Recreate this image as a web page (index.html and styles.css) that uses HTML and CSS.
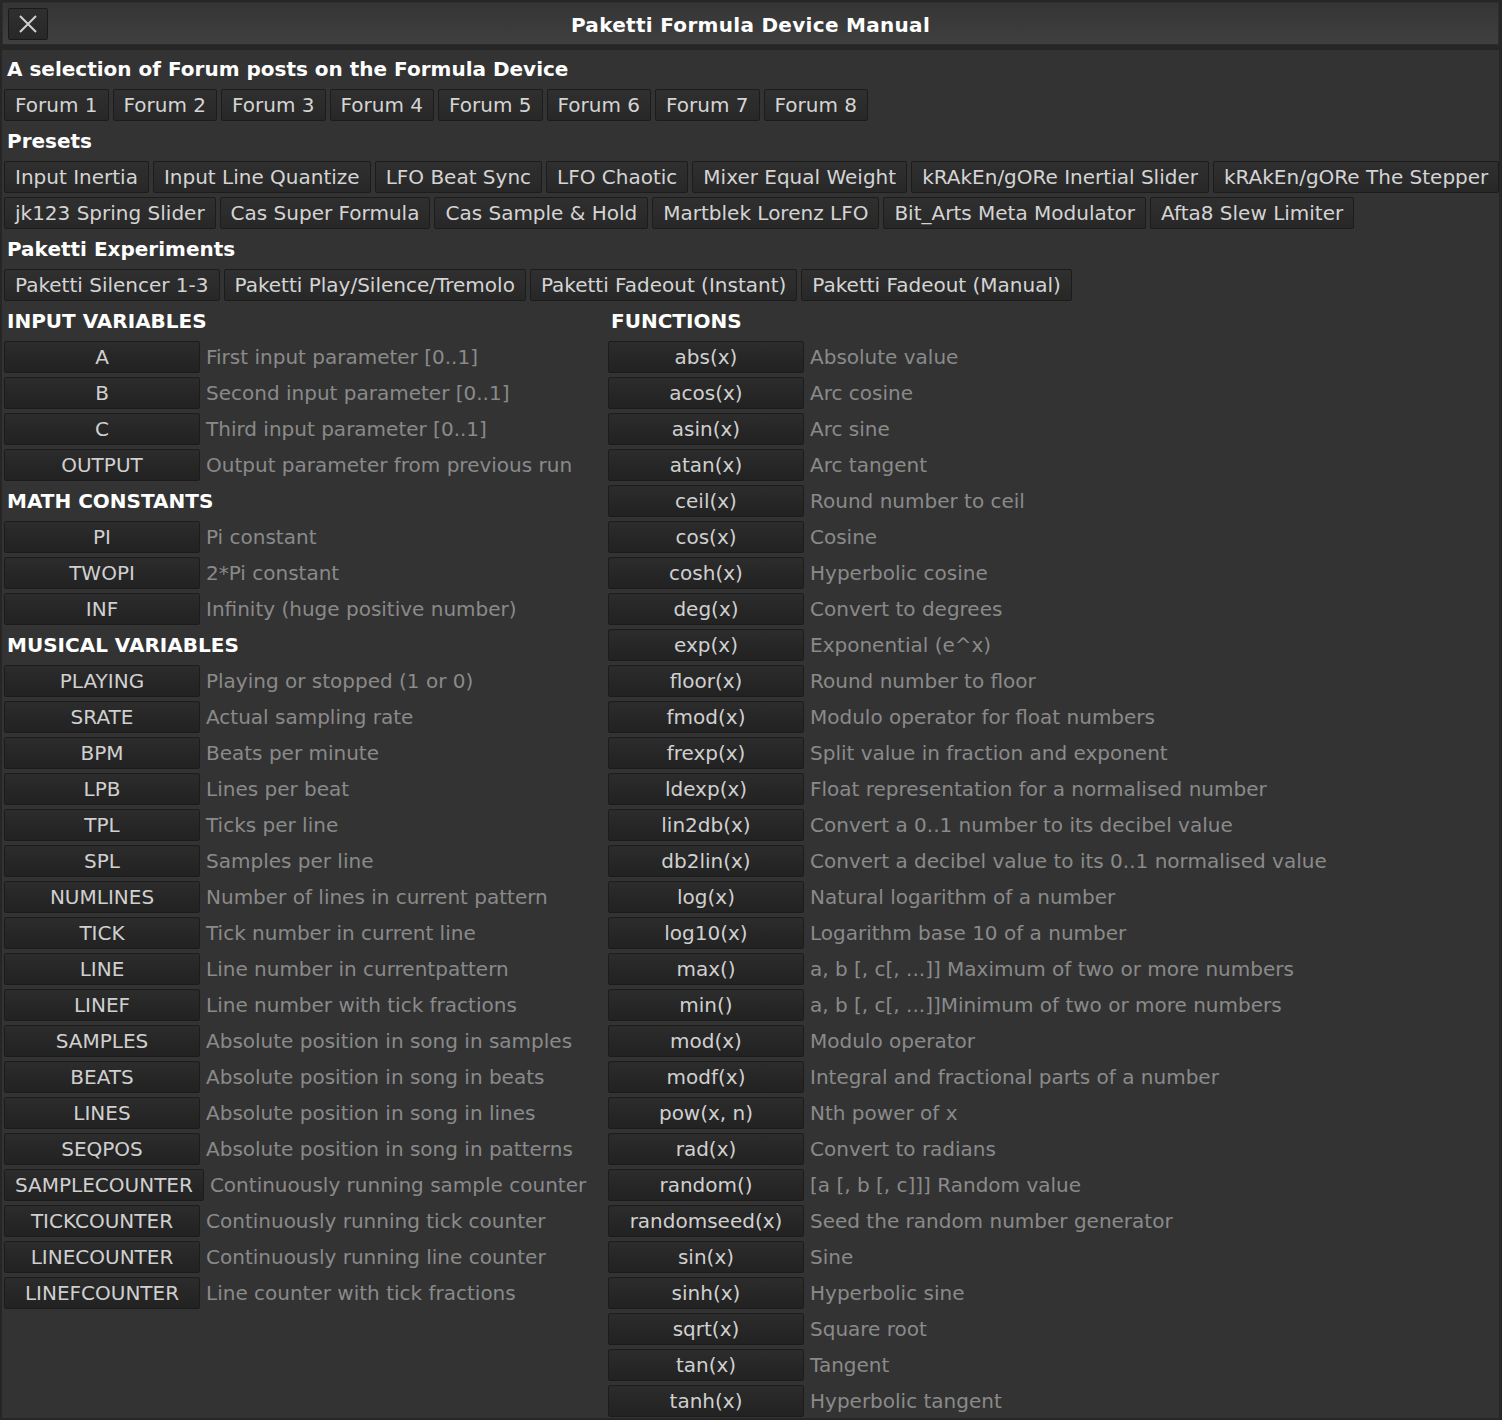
FILE: index.html
```html
<!DOCTYPE html>
<html lang="en">
<head>
  <meta charset="UTF-8">
  <title>Paketti Formula Device Manual</title>
  <link rel="stylesheet" href="styles.css">
</head>
<body>
  <div class="window">
    <div class="titlebar">
      <button class="close" aria-label="Close">
        <svg width="20" height="20" viewBox="0 0 20 20"><path d="M2 2 L18 18 M18 2 L2 18" stroke="#d0d0d0" stroke-width="2"/></svg>
      </button>
      <div class="title">Paketti Formula Device Manual</div>
    </div>
    <div class="content">
      <div class="heading">A selection of Forum posts on the Formula Device</div>
      <div class="btnrow">
        <button class="btn">Forum 1</button>
        <button class="btn">Forum 2</button>
        <button class="btn">Forum 3</button>
        <button class="btn">Forum 4</button>
        <button class="btn">Forum 5</button>
        <button class="btn">Forum 6</button>
        <button class="btn">Forum 7</button>
        <button class="btn">Forum 8</button>
      </div>
      <div class="heading">Presets</div>
      <div class="btnrow">
        <button class="btn">Input Inertia</button>
        <button class="btn">Input Line Quantize</button>
        <button class="btn">LFO Beat Sync</button>
        <button class="btn">LFO Chaotic</button>
        <button class="btn">Mixer Equal Weight</button>
        <button class="btn">kRAkEn/gORe Inertial Slider</button>
        <button class="btn">kRAkEn/gORe The Stepper</button>
      </div>
      <div class="btnrow">
        <button class="btn">jk123 Spring Slider</button>
        <button class="btn">Cas Super Formula</button>
        <button class="btn">Cas Sample &amp; Hold</button>
        <button class="btn">Martblek Lorenz LFO</button>
        <button class="btn">Bit_Arts Meta Modulator</button>
        <button class="btn">Afta8 Slew Limiter</button>
      </div>
      <div class="heading">Paketti Experiments</div>
      <div class="btnrow">
        <button class="btn">Paketti Silencer 1-3</button>
        <button class="btn">Paketti Play/Silence/Tremolo</button>
        <button class="btn">Paketti Fadeout (Instant)</button>
        <button class="btn">Paketti Fadeout (Manual)</button>
      </div>

      <div class="columns">
        <div class="col">
          <div class="heading">INPUT VARIABLES</div>
          <div class="row"><button class="key">A</button><span class="desc">First input parameter [0..1]</span></div>
          <div class="row"><button class="key">B</button><span class="desc">Second input parameter [0..1]</span></div>
          <div class="row"><button class="key">C</button><span class="desc">Third input parameter [0..1]</span></div>
          <div class="row"><button class="key">OUTPUT</button><span class="desc">Output parameter from previous run</span></div>
          <div class="heading">MATH CONSTANTS</div>
          <div class="row"><button class="key">PI</button><span class="desc">Pi constant</span></div>
          <div class="row"><button class="key">TWOPI</button><span class="desc">2*Pi constant</span></div>
          <div class="row"><button class="key">INF</button><span class="desc">Infinity (huge positive number)</span></div>
          <div class="heading">MUSICAL VARIABLES</div>
          <div class="row"><button class="key">PLAYING</button><span class="desc">Playing or stopped (1 or 0)</span></div>
          <div class="row"><button class="key">SRATE</button><span class="desc">Actual sampling rate</span></div>
          <div class="row"><button class="key">BPM</button><span class="desc">Beats per minute</span></div>
          <div class="row"><button class="key">LPB</button><span class="desc">Lines per beat</span></div>
          <div class="row"><button class="key">TPL</button><span class="desc">Ticks per line</span></div>
          <div class="row"><button class="key">SPL</button><span class="desc">Samples per line</span></div>
          <div class="row"><button class="key">NUMLINES</button><span class="desc">Number of lines in current pattern</span></div>
          <div class="row"><button class="key">TICK</button><span class="desc">Tick number in current line</span></div>
          <div class="row"><button class="key">LINE</button><span class="desc">Line number in currentpattern</span></div>
          <div class="row"><button class="key">LINEF</button><span class="desc">Line number with tick fractions</span></div>
          <div class="row"><button class="key">SAMPLES</button><span class="desc">Absolute position in song in samples</span></div>
          <div class="row"><button class="key">BEATS</button><span class="desc">Absolute position in song in beats</span></div>
          <div class="row"><button class="key">LINES</button><span class="desc">Absolute position in song in lines</span></div>
          <div class="row"><button class="key">SEQPOS</button><span class="desc">Absolute position in song in patterns</span></div>
          <div class="row"><button class="key">SAMPLECOUNTER</button><span class="desc">Continuously running sample counter</span></div>
          <div class="row"><button class="key">TICKCOUNTER</button><span class="desc">Continuously running tick counter</span></div>
          <div class="row"><button class="key">LINECOUNTER</button><span class="desc">Continuously running line counter</span></div>
          <div class="row"><button class="key">LINEFCOUNTER</button><span class="desc">Line counter with tick fractions</span></div>
        </div>
        <div class="col">
          <div class="heading">FUNCTIONS</div>
          <div class="row"><button class="key">abs(x)</button><span class="desc">Absolute value</span></div>
          <div class="row"><button class="key">acos(x)</button><span class="desc">Arc cosine</span></div>
          <div class="row"><button class="key">asin(x)</button><span class="desc">Arc sine</span></div>
          <div class="row"><button class="key">atan(x)</button><span class="desc">Arc tangent</span></div>
          <div class="row"><button class="key">ceil(x)</button><span class="desc">Round number to ceil</span></div>
          <div class="row"><button class="key">cos(x)</button><span class="desc">Cosine</span></div>
          <div class="row"><button class="key">cosh(x)</button><span class="desc">Hyperbolic cosine</span></div>
          <div class="row"><button class="key">deg(x)</button><span class="desc">Convert to degrees</span></div>
          <div class="row"><button class="key">exp(x)</button><span class="desc">Exponential (e^x)</span></div>
          <div class="row"><button class="key">floor(x)</button><span class="desc">Round number to floor</span></div>
          <div class="row"><button class="key">fmod(x)</button><span class="desc">Modulo operator for float numbers</span></div>
          <div class="row"><button class="key">frexp(x)</button><span class="desc">Split value in fraction and exponent</span></div>
          <div class="row"><button class="key">ldexp(x)</button><span class="desc">Float representation for a normalised number</span></div>
          <div class="row"><button class="key">lin2db(x)</button><span class="desc">Convert a 0..1 number to its decibel value</span></div>
          <div class="row"><button class="key">db2lin(x)</button><span class="desc">Convert a decibel value to its 0..1 normalised value</span></div>
          <div class="row"><button class="key">log(x)</button><span class="desc">Natural logarithm of a number</span></div>
          <div class="row"><button class="key">log10(x)</button><span class="desc">Logarithm base 10 of a number</span></div>
          <div class="row"><button class="key">max()</button><span class="desc">a, b [, c[, ...]] Maximum of two or more numbers</span></div>
          <div class="row"><button class="key">min()</button><span class="desc">a, b [, c[, ...]]Minimum of two or more numbers</span></div>
          <div class="row"><button class="key">mod(x)</button><span class="desc">Modulo operator</span></div>
          <div class="row"><button class="key">modf(x)</button><span class="desc">Integral and fractional parts of a number</span></div>
          <div class="row"><button class="key">pow(x, n)</button><span class="desc">Nth power of x</span></div>
          <div class="row"><button class="key">rad(x)</button><span class="desc">Convert to radians</span></div>
          <div class="row"><button class="key">random()</button><span class="desc">[a [, b [, c]]] Random value</span></div>
          <div class="row"><button class="key">randomseed(x)</button><span class="desc">Seed the random number generator</span></div>
          <div class="row"><button class="key">sin(x)</button><span class="desc">Sine</span></div>
          <div class="row"><button class="key">sinh(x)</button><span class="desc">Hyperbolic sine</span></div>
          <div class="row"><button class="key">sqrt(x)</button><span class="desc">Square root</span></div>
          <div class="row"><button class="key">tan(x)</button><span class="desc">Tangent</span></div>
          <div class="row"><button class="key">tanh(x)</button><span class="desc">Hyperbolic tangent</span></div>
        </div>
      </div>
    </div>
  </div>
</body>
</html>
```
FILE: styles.css
```css
html, body {
  margin: 0;
  padding: 0;
  background-color: #262626;
}
body {
  font-family: "DejaVu Sans", "Liberation Sans", sans-serif;
  font-size: 20px;
  color: #d2d2d2;
}
.window {
  width: 1502px;
  height: 1420px;
  box-sizing: border-box;
  border: 2px solid #262626;
  border-right-width: 3px;
  background-color: #333333;
  overflow: hidden;
}
.titlebar {
  position: relative;
  height: 43px;
  box-sizing: border-box;
  background: linear-gradient(to bottom, #353535 0%, #3a3a3a 50%, #404040 100%);
  border: 1px solid #2e2e2e;
  border-bottom: 1px solid #2a2a2a;
  display: flex;
  align-items: center;
  justify-content: center;
  padding-top: 2px;
}
.titlebar + .content {
  border-top: 5px solid #262626;
}
.close {
  position: absolute;
  left: 5px;
  top: 5px;
  width: 40px;
  height: 32px;
  padding: 0;
  background: linear-gradient(to bottom, #2f2f2f, #282828);
  border: 1px solid #1a1a1a;
  border-radius: 2px;
  display: flex;
  align-items: center;
  justify-content: center;
}
.title {
  font-weight: bold;
  color: #ffffff;
  font-size: 20px;
  letter-spacing: 0.3px;
}
.content {
  padding: 3px 2px 0 2px;
  display: flex;
  flex-direction: column;
  gap: 4px;
}
.heading {
  height: 32px;
  line-height: 32px;
  padding-left: 3px;
  font-weight: bold;
  color: #ffffff;
  white-space: nowrap;
}
.btnrow {
  display: flex;
  gap: 4px;
}
.btn, .key {
  font-family: inherit;
  font-size: 20px;
  height: 32px;
  line-height: 30px;
  box-sizing: border-box;
  padding: 0 10px;
  color: #d4d4d4;
  background: linear-gradient(to bottom, #2f2f2f 0%, #2b2b2b 60%, #272727 100%);
  border: 1px solid #1c1c1c;
  border-radius: 2px;
  white-space: nowrap;
  cursor: pointer;
}
.btn:hover, .key:hover {
  background: #3a3a3a;
}
.columns {
  display: grid;
  grid-template-columns: 600px 1fr;
  column-gap: 4px;
}
.col {
  display: flex;
  flex-direction: column;
  gap: 4px;
}
.row {
  display: flex;
  align-items: center;
  gap: 6px;
  height: 32px;
}
.key {
  min-width: 196px;
  text-align: center;
  color: #d0d0d0;
  background: linear-gradient(to bottom, #2c2c2c 0%, #262626 55%, #222222 100%);
}
.desc {
  color: #8a8a8a;
  white-space: nowrap;
}
```
